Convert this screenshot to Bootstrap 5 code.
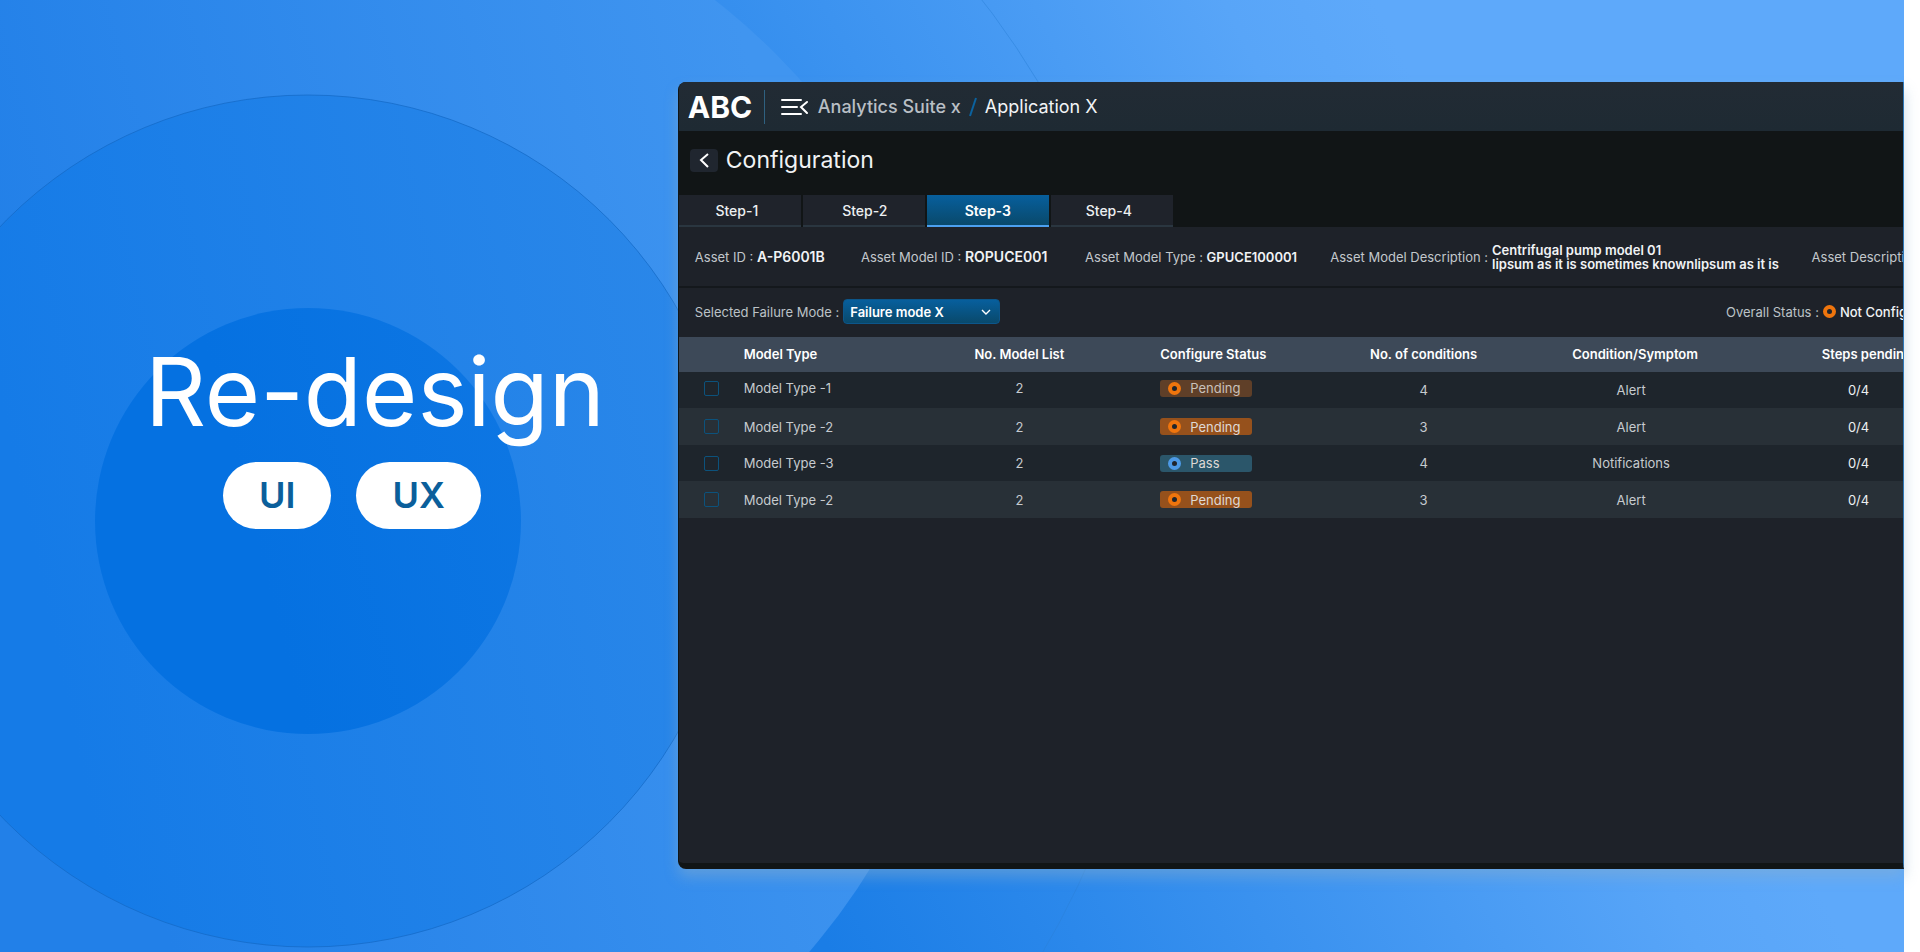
<!DOCTYPE html>
<html lang="en">
<head>
<meta charset="utf-8">
<meta name="viewport" content="width=device-width, initial-scale=1">
<title>Re-design UI UX</title>
<link href="https://cdn.jsdelivr.net/npm/bootstrap@5.3.0/dist/css/bootstrap.min.css" rel="stylesheet">
<style>
body{font-family:"Inter","Open Sans",sans-serif;background:#fff;color:#e3e6e9;font-size:13px;line-height:18px;overflow-x:hidden}
.stage{min-height:100vh;margin-right:16px;isolation:isolate}
.backdrop{position:absolute;inset:0;width:100%;height:100%;z-index:-1}
.hero{width:678px;flex:0 1 35.6%;padding:334px 0 0 145px}
.hero h1{font-size:95px;line-height:116px;font-weight:400;color:#fff;margin:0 0 12px}
.tag{background:#fff;color:#0b5f9b;font-size:36px;line-height:67px;font-weight:600;padding:0 36px;border-radius:34px}
.tags{gap:25px;padding-left:78px}
.app{margin:82px 0 83px;background:#1e2229;border-left:1px solid #101517;border-right:1px solid #2f78b8;border-bottom:6px solid #111516;border-radius:8px 0 0 8px;box-shadow:0 8px 14px rgba(140,175,205,.45);overflow:hidden;min-width:0}
.topbar{height:49px;background:linear-gradient(#222b34,#1e2a33);padding-left:9px}
.logo{font-size:30px;line-height:34px;font-weight:700;color:#fff;width:76px}
.split{width:1px;height:34px;background:#2f6180;margin-right:16px}
.plain{background:none;border:0;padding:0;line-height:0}
.crumbs{font-size:18px;line-height:24px;font-weight:400;color:#f2f4f6;margin-left:9px}
.crumbs a{color:#b9bfc5;text-decoration:none;font-weight:500}
.titlebar{height:64px;background:#111516;padding:0 0 6px 11px}
.titlebar h2{font-size:23px;line-height:28px;font-weight:400;color:#f0f2f4;margin:0}
.back{width:28px;height:23px;border:0;border-radius:4px;background:#20262f;padding:0}
.steps{background:#111516;gap:2px}
.step{width:122px;height:32px;border:0;border-bottom:2px solid #2a3640;background:#1f232b;color:#eceff1;font-size:14px;font-weight:500;padding:2px 6px 0 0}
.step.on{background:linear-gradient(#075f9d,#09496b);border-color:#4ca0f0;color:#fff;font-weight:600;padding-right:0}
.assets{display:grid;grid-template-columns:166fr 224fr 245fr 481fr 177fr;width:107%;height:61px;border-bottom:2px solid #14181c;align-items:center;padding-left:16px;color:#c3c8cc;white-space:nowrap}
.assets b{font-weight:600;color:#f1f3f5}
.assets .big{font-size:14px}
.assets .fine{line-height:14px}
.filter{height:49px;padding:0 0 2px 16px;color:#bcc2c7}
.mode{width:157px;height:25px;border:1px solid #0c568a;border-radius:4px;background:linear-gradient(#075f9d,#09496b);color:#fff;font-weight:600;font-size:13px;padding:0 6px;appearance:none;line-height:18px}
.modebox{position:relative}
.modebox svg{position:absolute;right:9px;top:9px;pointer-events:none}
.overall{width:177px;white-space:nowrap}
.overall b{font-weight:500;color:#f1f3f5}
.models{table-layout:fixed;width:106%;border-collapse:collapse;white-space:nowrap;text-align:center;color:#c6cbcf}
.models th{height:35px;background:#3d4958;color:#fff;font-weight:600;padding:0 0 2px;font-size:13px}
.models td{height:36px;padding:0;background:#1e252c}
.models tr:nth-child(even) td{background:#283037;height:37px}
.models .l{text-align:left}
.models th:last-child{padding-left:75px;text-align:left}
.models td:nth-child(6){padding-right:8px}
.models td:last-child{color:#eceff1;padding-right:6px}
.models .lift td:nth-child(-n+4){padding-bottom:4px}
.models input{appearance:none;width:15px;height:15px;border:1px solid #0c527c;border-radius:2px;display:block;margin:0 auto}
.state{display:flex;align-items:center;gap:9px;width:92px;height:17px;border-radius:3px;background:#96511c;padding-left:8px;color:#dfd9d5}
.state.dim{background:#5f3f28;color:#c9c1bb}
.state.ok{background:#2b566a}
.ring{display:inline-block;flex:none;width:13px;height:13px;border:4px solid #ef750d;border-radius:50%;background:#20252c}
.ok .ring{border-color:#4d9ae6}
</style>
</head>
<body>
<main class="stage d-flex position-relative">
<svg class="backdrop" viewBox="0 0 1904 952" preserveAspectRatio="xMinYMin slice" aria-hidden="true">
<defs>
<linearGradient id="g0" gradientUnits="userSpaceOnUse" x1="850" y1="952" x2="1650" y2="552"><stop offset="0" stop-color="#1a7de6"/><stop offset=".85" stop-color="#58a5f8"/><stop offset="1" stop-color="#5ea9fa"/></linearGradient>
<linearGradient id="g1" gradientUnits="userSpaceOnUse" x1="830" y1="952" x2="1630" y2="502"><stop offset="0" stop-color="#1a7de6"/><stop offset="1" stop-color="#5ea9fa"/></linearGradient>
<linearGradient id="g2" gradientUnits="userSpaceOnUse" x1="0" y1="300" x2="760" y2="100"><stop offset="0" stop-color="#2280e8"/><stop offset="1" stop-color="#4095f0"/></linearGradient>
<linearGradient id="g3" gradientUnits="userSpaceOnUse" x1="0" y1="400" x2="734" y2="240"><stop offset="0" stop-color="#157be7"/><stop offset="1" stop-color="#2c88e9"/></linearGradient>
<linearGradient id="g4" gradientUnits="userSpaceOnUse" x1="250" y1="520" x2="521" y2="450"><stop offset="0" stop-color="#0571e1"/><stop offset="1" stop-color="#0d76e3"/></linearGradient>
</defs>
<rect width="1920" height="952" fill="url(#g0)"/>
<circle cx="308" cy="521" r="852" fill="url(#g1)" stroke="#2a7fd8" stroke-opacity=".5"/>
<circle cx="308" cy="521" r="661" fill="url(#g2)"/>
<circle cx="308" cy="521" r="426" fill="url(#g3)" stroke="#1268c4" stroke-opacity=".7"/>
<circle cx="308" cy="521" r="213" fill="url(#g4)"/>
</svg>
<section class="hero flex-shrink-0">
<h1>Re-design</h1>
<div class="tags d-flex"><span class="tag">UI</span><span class="tag">UX</span></div>
</section>
<section class="app flex-grow-1">
<header class="topbar d-flex align-items-center">
<span class="logo">ABC</span><span class="split"></span>
<button class="plain" aria-label="Collapse menu"><svg width="28" height="18" fill="none" stroke="#fff" stroke-width="2"><path d="M1 2h19M1 9h15M1 16h19M26 4l-6 5 6 6" stroke-linecap="round"/></svg></button>
<nav class="crumbs d-flex align-items-center" aria-label="breadcrumb"><a href="#">Analytics Suite x</a><svg class="mx-2" width="8" height="20"><path d="M1 19L7 1" stroke="#0b629f" stroke-width="2"/></svg><span>Application X</span></nav>
</header>
<div class="titlebar d-flex align-items-center gap-2">
<button class="back" aria-label="Back"><svg class="d-block mx-auto" width="12" height="15" fill="none" stroke="#fff" stroke-width="2"><path d="M10 1L3 7l7 7"/></svg></button>
<h2>Configuration</h2>
</div>
<nav class="steps d-flex"><button class="step">Step-1</button><button class="step ps-2">Step-2</button><button class="step on">Step-3</button><button class="step">Step-4</button></nav>
<div class="assets">
<div>Asset ID : <b class="big">A-P6001B</b></div>
<div>Asset Model ID : <b class="big">ROPUCE001</b></div>
<div>Asset Model Type : <b>GPUCE100001</b></div>
<div class="d-flex align-items-center gap-1"><span>Asset Model Description :</span><b class="fine">Centrifugal pump model 01<br>lipsum as it is sometimes knownlipsum as it is</b></div>
<div>Asset Descripti</div>
</div>
<div class="filter d-flex align-items-center justify-content-between">
<div class="d-flex align-items-center gap-1"><label for="mode">Selected Failure Mode :</label>
<span class="modebox"><select class="mode" id="mode"><option>Failure mode X</option></select><svg width="10" height="8" fill="none" stroke="#fff" stroke-width="1.4"><path d="M1 2l4 4 4-4"/></svg></span></div>
<div class="overall d-flex align-items-center gap-1"><span>Overall Status :</span><span class="ring"></span><b>Not Config</b></div>
</div>
<table class="models">
<colgroup><col style="width:5%"><col style="width:10.4%"><col style="width:21.7%"><col style="width:12.6%"><col style="width:15.4%"><col style="width:17.2%"><col></colgroup>
<thead><tr><th></th><th class="l">Model Type</th><th>No. Model List</th><th class="l">Configure Status</th><th>No. of conditions</th><th>Condition/Symptom</th><th>Steps pendin</th></tr></thead>
<tbody>
<tr class="lift"><td><input type="checkbox" aria-label="Select Model Type -1"></td><td class="l">Model Type -1</td><td>2</td><td><span class="state dim"><span class="ring"></span>Pending</span></td><td>4</td><td>Alert</td><td>0/4</td></tr>
<tr><td><input type="checkbox" aria-label="Select Model Type -2"></td><td class="l">Model Type -2</td><td>2</td><td><span class="state"><span class="ring"></span>Pending</span></td><td>3</td><td>Alert</td><td>0/4</td></tr>
<tr><td><input type="checkbox" aria-label="Select Model Type -3"></td><td class="l">Model Type -3</td><td>2</td><td><span class="state ok"><span class="ring"></span>Pass</span></td><td>4</td><td>Notifications</td><td>0/4</td></tr>
<tr><td><input type="checkbox" aria-label="Select second Model Type -2"></td><td class="l">Model Type -2</td><td>2</td><td><span class="state"><span class="ring"></span>Pending</span></td><td>3</td><td>Alert</td><td>0/4</td></tr>
</tbody>
</table>
</section>
</main>
<script src="https://cdn.jsdelivr.net/npm/bootstrap@5.3.0/dist/js/bootstrap.bundle.min.js"></script>
</body>
</html>
